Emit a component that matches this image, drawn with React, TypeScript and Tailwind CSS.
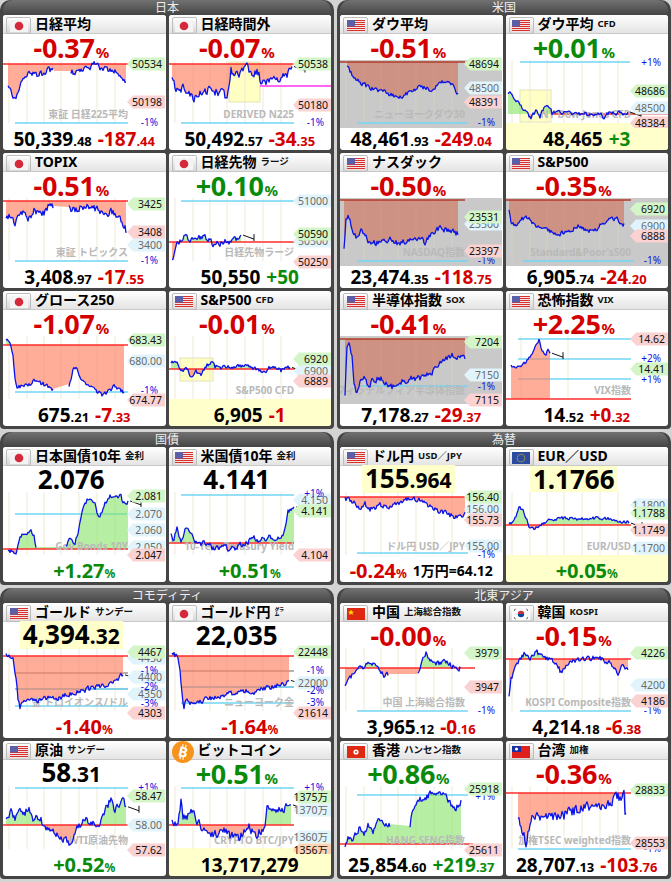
import { useId, useMemo } from "react";

type Tag = [number, string, "g" | "p" | "b" | "n" | "o"];
type ChartSpec = {
  base: number;
  baseX?: [number, number];
  pts: [number, number][];
  noise: number;
  seed: number;
  gaps?: [number, number][];
  tags: Tag[];
  cyan?: number[];
  cyanX?: [number, number];
  grayLines?: number[];
  gridX?: number[];
  wm?: string;
  gray?: boolean;
  box?: [number, number, number, number];
  mag?: [number, number, number];
  invert?: boolean;
  yellowFrom?: number;
  mark?: boolean;
};
type Num = [string, string, "k" | "r" | "g"];
type CardSpec = {
  flag: string;
  title: string;
  sub?: string;
  top: { p?: string; c?: "r" | "g"; i?: string; f?: string; hl?: boolean };
  chart: ChartSpec;
  foot: { n?: Num[]; p?: string; c?: "r" | "g"; extra?: string; yellow?: boolean };
};

const W = 162;
const H = 68;
const RED = "#d40000";
const GREEN = "#0a8a0a";
const col = (c: string) => (c === "r" ? RED : c === "g" ? GREEN : "#000");

function rng(seed: number) {
  let a = seed * 9973;
  return () => {
    a = (a + 0x6d2b79f5) | 0;
    let t = Math.imul(a ^ (a >>> 15), 1 | a);
    t = (t + Math.imul(t ^ (t >>> 7), 61 | t)) ^ t;
    return ((t ^ (t >>> 14)) >>> 0) / 4294967296;
  };
}

function build(c: ChartSpec): [number, number, boolean][] {
  const r = rng(c.seed);
  const P = c.pts;
  const out: [number, number, boolean][] = [];
  let v = 0;
  for (let x = P[0][0]; x <= P[P.length - 1][0]; x += 1) {
    let i = 0;
    while (i < P.length - 2 && x > P[i + 1][0]) i++;
    const [ax, ay] = P[i];
    const [bx, by] = P[i + 1];
    const t = bx === ax ? 0 : (x - ax) / (bx - ax);
    const y0 = ay + (by - ay) * t;
    const gap = (c.gaps ?? []).some(([a, b]) => x > a && x < b);
    v = 0.3 * v + (r() - 0.5) * 2 * c.noise;
    const y = gap ? y0 : Math.max(0, Math.min(H, y0 + v));
    out.push([x, y, gap]);
  }
  return out;
}

function Chart({ c }: { c: ChartSpec }) {
  const id = useId().replace(/:/g, "");
  const pts = useMemo(() => build(c), [c]);
  const x0 = pts[0][0];
  const last = pts[pts.length - 1];
  const x1 = last[0];
  const [bx0, bx1] = c.baseX ?? [0, 125];
  const [cx0, cx1] = c.cyanX ?? [12, 125];
  const fillD =
    `M${x0},${c.base} ` + pts.map((p) => `L${p[0]},${p[1].toFixed(1)}`).join(" ") + ` L${x1},${c.base} Z`;
  const segs: string[] = [];
  let cur = "";
  pts.forEach(([x, y, g]) => {
    if (g) {
      if (cur) segs.push(cur);
      cur = "";
    } else cur += (cur ? " L" : "M") + `${x},${y.toFixed(1)}`;
  });
  if (cur) segs.push(cur);
  const salmon = c.gray ? "#d06a52" : "#ff7f5f";
  const salOp = c.gray ? 0.58 : 0.64;
  const up = c.invert ? salmon : "#86e466";
  const upOp = c.invert ? salOp : 0.6;
  const dn = c.invert ? "#86e466" : salmon;
  const dnOp = c.invert ? 0.6 : salOp;
  const grid = c.gridX ?? [6, 24, 41, 58, 76, 94, 112];
  const tagBg: Record<string, string> = { g: "#d3f5c8", p: "#fbd2d2", b: "#e1f4fb", o: "#fcd3b4" };
  const order = ["b", "n", "g", "p", "o"];
  const tags = [...c.tags].sort((a, b) => order.indexOf(a[2]) - order.indexOf(b[2]));
  return (
    <svg
      width={W}
      height={H}
      className="block overflow-visible"
      fontFamily="'Noto Sans', 'Noto Sans CJK JP', sans-serif"
    >
      <defs>
        <clipPath id={id + "a"}>
          <rect x={0} y={0} width={W} height={c.base} />
        </clipPath>
        <clipPath id={id + "b"}>
          <rect x={0} y={c.base} width={W} height={H - c.base} />
        </clipPath>
      </defs>
      {c.gray && <rect x={0} y={0} width={W} height={H} fill="#c9c9c9" />}
      {c.yellowFrom !== undefined && <rect x={0} y={c.yellowFrom} width={W} height={H - c.yellowFrom} fill="#ffffcc" />}
      {c.box && (
        <rect
          x={c.box[0]}
          y={c.box[1]}
          width={c.box[2] - c.box[0]}
          height={c.box[3] - c.box[1]}
          fill="#ffffc4"
          stroke="#e2e2b8"
        />
      )}
      {grid.map((x) => (
        <line key={x} x1={x} x2={x} y1={0} y2={63} stroke={c.gray ? "#d6d0c2" : "#efe9d6"} strokeWidth={1} />
      ))}
      {(c.grayLines ?? []).map((y) => (
        <line key={"g" + y} x1={12} x2={125} y1={y} y2={y} stroke="#9a9a9a" strokeWidth={1.5} />
      ))}
      {(c.cyan ?? []).map((y) => (
        <line key={"c" + y} x1={cx0} x2={cx1} y1={y} y2={y} stroke="#6fd6f4" strokeWidth={1.6} />
      ))}
      <path d={fillD} fill={up} fillOpacity={upOp} clipPath={`url(#${id}a)`} />
      <path d={fillD} fill={dn} fillOpacity={dnOp} clipPath={`url(#${id}b)`} />
      <line x1={bx0} x2={bx1} y1={c.base} y2={c.base} stroke={c.gray ? "#b23a28" : "#ff2d2d"} strokeWidth={1.3} />
      {c.mag && <line x1={c.mag[0]} x2={c.mag[1]} y1={c.mag[2]} y2={c.mag[2]} stroke="#ff33ee" strokeWidth={1.3} />}
      {c.wm && (
        <text x={125} y={58} textAnchor="end" fontSize={10} fontWeight={700} fill="#b9b9b9">
          {c.wm}
        </text>
      )}
      {segs.map((d, i) => (
        <path key={i} d={d} fill="none" stroke="#0a14e6" strokeWidth={1.3} strokeLinejoin="round" />
      ))}
      {c.mark && (
        <g stroke="#111" strokeWidth={1} fill="none">
          <path d={`M${x1 + 2},${last[1].toFixed(1)} L${x1 + 13},${(last[1] + 4).toFixed(1)}`} />
          <path d={`M${x1 + 13},${(last[1] - 1).toFixed(1)} L${x1 + 13},${(last[1] + 6).toFixed(1)}`} />
        </g>
      )}
      {tags.map(([y, t, k], i) =>
        k === "n" ? (
          <text key={i} x={155} y={Math.min(y, 62) + 3.5} textAnchor="end" fontSize={10} fill="#1010dd">
            {t}
          </text>
        ) : (
          <g key={i}>
            <polygon
              points={`124,${y} 130,${y - 6.5} 162,${y - 6.5} 162,${y + 6.5} 130,${y + 6.5}`}
              fill={tagBg[k]}
            />
            <text x={159} y={y + 3.6} textAnchor="end" fontSize={10.5} fill={k === "b" ? "#6a6a6a" : "#111"}>
              {t}
            </text>
          </g>
        )
      )}
    </svg>
  );
}

function Flag({ f }: { f: string }) {
  if (f === "btc") {
    return (
      <div className="ml-[3px] mt-[3px] flex h-[22px] w-[22px] shrink-0 items-center justify-center rounded-full bg-[#f7931a]">
        <svg width={14} height={16} viewBox="0 0 14 16">
          <g transform="rotate(12 7 8)">
            <text x={7} y={13} textAnchor="middle" fontSize={14} fontWeight={700} fill="#fff" fontFamily="'Noto Sans', sans-serif">
              B
            </text>
            <path d="M5.5 0.5 V3 M8.5 0.5 V3 M5.5 13 V15.5 M8.5 13 V15.5" stroke="#fff" strokeWidth={1.3} />
          </g>
        </svg>
      </div>
    );
  }
  let inner = null;
  if (f === "jp")
    inner = (
      <>
        <rect width={18} height={12} fill="#f4f4f4" />
        <circle cx={9} cy={6} r={4.3} fill="#d42a3c" />
      </>
    );
  if (f === "us")
    inner = (
      <>
        <rect width={18} height={12} fill="#f6f6f6" />
        {[0, 2, 4, 6, 8, 10].map((y) => (
          <rect key={y} y={y} width={18} height={1.1} fill="#d8322e" />
        ))}
        <rect width={8} height={6.5} fill="#5a5fa8" />
      </>
    );
  if (f === "cn")
    inner = (
      <>
        <rect width={18} height={12} fill="#de2910" />
        <polygon points="4,1.5 4.9,3.6 7,3.7 5.4,5 6,7 4,5.8 2,7 2.6,5 1,3.7 3.1,3.6" fill="#ffde00" />
      </>
    );
  if (f === "kr")
    inner = (
      <>
        <rect width={18} height={12} fill="#fafafa" />
        <path d="M5.8 6 A3.2 3.2 0 0 1 12.2 6 Z" fill="#cd2e3a" />
        <path d="M5.8 6 A3.2 3.2 0 0 0 12.2 6 Z" fill="#0047a0" />
        <path d="M2 2.5 L3.5 1.2 M14.5 1.2 L16 2.5 M2 9.5 L3.5 10.8 M14.5 10.8 L16 9.5" stroke="#222" strokeWidth={1} />
      </>
    );
  if (f === "hk")
    inner = (
      <>
        <rect width={18} height={12} fill="#de2910" />
        <circle cx={9} cy={6} r={2.6} fill="#fff" />
        <circle cx={9} cy={6} r={0.9} fill="#de2910" />
      </>
    );
  if (f === "tw")
    inner = (
      <>
        <rect width={18} height={12} fill="#e0201c" />
        <rect width={9} height={6} fill="#1a2fa0" />
        <circle cx={4.5} cy={3} r={1.6} fill="#fff" />
      </>
    );
  if (f === "eu")
    inner = (
      <>
        <rect width={18} height={12} fill="#2b4aa0" />
        {Array.from({ length: 12 }, (_, i) => (
          <circle
            key={i}
            cx={9 + 3.8 * Math.cos((i * Math.PI) / 6)}
            cy={6 + 3.8 * Math.sin((i * Math.PI) / 6)}
            r={0.55}
            fill="#ffd700"
          />
        ))}
      </>
    );
  return (
    <div className="ml-[3px] mt-[3px] flex h-[17px] w-[25px] shrink-0 items-center justify-center rounded-[2px] border border-[#bdbdbd] bg-gradient-to-b from-white to-[#d6d6d6]">
      <svg width={18} height={12}>{inner}</svg>
    </div>
  );
}

function Card({ s }: { s: CardSpec }) {
  const t = s.top;
  return (
    <div className="flex h-[135px] flex-col overflow-hidden rounded-[3px] bg-white">
      <div className="flex h-[19px] shrink-0 items-center border-b border-[#c9c9c9] bg-gradient-to-b from-white to-[#e4e4e4]">
        <Flag f={s.flag} />
        <span className="ml-[4px] text-[14px] font-bold leading-none text-black">{s.title}</span>
        {s.sub && <span className="ml-[4px] text-[9.5px] font-bold leading-none text-[#111]">{s.sub}</span>}
      </div>
      <div className="flex h-[26px] shrink-0 items-center justify-center pr-[26px]">
        {t.p ? (
          <span className="text-[27px] font-bold leading-none tracking-[-0.3px]" style={{ color: col(t.c!) }}>
            {t.p}
            <span className="ml-[1px] text-[15px]">%</span>
          </span>
        ) : (
          <span className={`px-[3px] text-[26px] font-bold leading-[26px] text-black ${t.hl ? "bg-[#ffffcc]" : ""}`}>
            {t.i}
            {t.f && <span className="text-[21px]">{t.f}</span>}
          </span>
        )}
      </div>
      <div className="h-[68px] shrink-0">
        <Chart c={s.chart} />
      </div>
      <div
        className={`flex h-[22px] shrink-0 items-center justify-center gap-[6px] ${s.foot.yellow ? "bg-[#ffffcc]" : ""}`}
      >
        {s.foot.n?.map(([i, f, c], k) => (
          <span key={k} className="text-[19px] font-bold leading-none" style={{ color: col(c) }}>
            {i}
            {f && <span className="text-[13px]">{f}</span>}
          </span>
        ))}
        {s.foot.p && (
          <span className="text-[20px] font-bold leading-none" style={{ color: col(s.foot.c!) }}>
            {s.foot.p}
            <span className="text-[12px]">%</span>
          </span>
        )}
        {s.foot.extra && <span className="text-[14px] font-bold leading-none text-black">{s.foot.extra}</span>}
      </div>
    </div>
  );
}

function Section({ title, cards }: { title: string; cards: CardSpec[] }) {
  return (
    <div className="rounded-t-[10px] rounded-b-[4px] bg-[#454545] px-[3px] pb-[3px]">
      <div className="h-[15px] rounded-t-[10px] bg-gradient-to-b from-[#727272] to-[#454545] text-center text-[12px] leading-[15px] text-[#eeeeee]">
        {title}
      </div>
      <div className="grid grid-cols-2 gap-[3px]">
        {cards.map((c) => (
          <Card key={c.title + (c.sub ?? "")} s={c} />
        ))}
      </div>
    </div>
  );
}

const japan: CardSpec[] = [
  {
    flag: "jp",
    title: "日経平均",
    top: { p: "-0.37", c: "r" },
    chart: {
      base: 4,
      pts: [[5, 27], [9, 35], [13, 40], [18, 25], [25, 12], [35, 16], [45, 10], [50, 11], [68, 11], [75, 14], [85, 8], [92, 4], [100, 10], [108, 9], [115, 14], [123, 23]],
      noise: 3,
      seed: 1,
      gaps: [[50, 68]],
      tags: [[4, "50534", "g"], [42, "50198", "p"], [63, "-1%", "n"]],
      cyan: [63],
      wm: "東証 日経225平均",
    },
    foot: { n: [["50,339", ".48", "k"], ["-187", ".44", "r"]] },
  },
  {
    flag: "jp",
    title: "日経時間外",
    top: { p: "-0.07", c: "r" },
    chart: {
      base: 4,
      pts: [[3, 20], [8, 30], [15, 28], [25, 38], [35, 30], [45, 32], [55, 33], [58, 40], [62, 10], [70, 15], [78, 8], [85, 14], [90, 12], [92, 25], [100, 22], [110, 18], [118, 14], [123, 8]],
      noise: 4,
      seed: 2,
      tags: [[4, "50538", "g"], [45, "50180", "p"], [63, "-1%", "n"]],
      cyan: [63],
      box: [60, 2, 91, 42],
      mag: [91, 162, 26],
      wm: "DERIVED N225",
      mark: true,
    },
    foot: { n: [["50,492", ".57", "k"], ["-34", ".35", "r"]] },
  },
  {
    flag: "jp",
    title: "TOPIX",
    top: { p: "-0.51", c: "r" },
    chart: {
      base: 3,
      pts: [[3, 22], [8, 18], [12, 25], [18, 14], [25, 20], [32, 12], [40, 16], [45, 9], [50, 8], [66, 9], [72, 12], [80, 8], [88, 9], [95, 12], [100, 16], [108, 14], [115, 18], [120, 26], [123, 32]],
      noise: 3.5,
      seed: 5,
      gaps: [[50, 66]],
      tags: [[6, "3425", "g"], [34, "3408", "p"], [47, "3400", "b"], [63, "-1%", "n"]],
      cyan: [63],
      wm: "東証 トピックス",
    },
    foot: { n: [["3,408", ".97", "k"], ["-17", ".55", "r"]] },
  },
  {
    flag: "jp",
    title: "日経先物",
    sub: "ラージ",
    top: { p: "+0.10", c: "g" },
    chart: {
      base: 44,
      pts: [[3, 64], [6, 52], [8, 44], [15, 40], [25, 42], [35, 38], [45, 46], [55, 44], [62, 44], [68, 40], [72, 37]],
      noise: 3,
      seed: 6,
      tags: [[3, "51000", "b"], [43, "50500", "b"], [36, "50590", "g"], [64, "50250", "p"]],
      cyan: [3],
      wm: "日経先物ラージ",
      mark: true,
    },
    foot: { n: [["50,550", "", "k"], ["+50", "", "g"]] },
  },
  {
    flag: "jp",
    title: "グロース250",
    top: { p: "-1.07", c: "r" },
    chart: {
      base: 9,
      pts: [[3, 4], [7, 6], [10, 20], [12, 40], [14, 52], [20, 50], [28, 49], [32, 44], [40, 48], [48, 52], [50, 53], [66, 48], [70, 35], [73, 32], [78, 45], [85, 50], [92, 54], [100, 60], [105, 56], [112, 50], [118, 54], [121, 57]],
      noise: 2,
      seed: 9,
      gaps: [[50, 66]],
      tags: [[25, "680.00", "b"], [54, "-1%", "n"], [4, "683.43", "g"], [64, "674.77", "p"]],
      cyan: [56],
      wm: "",
    },
    foot: { n: [["675", ".21", "k"], ["-7", ".33", "r"]] },
  },
  {
    flag: "us",
    title: "S&P500",
    sub: "CFD",
    top: { p: "-0.01", c: "r" },
    chart: {
      base: 33,
      baseX: [0, 162],
      pts: [[2, 28], [6, 24], [10, 30], [14, 36], [18, 32], [22, 40], [27, 36], [32, 38], [37, 30], [42, 26], [46, 31], [60, 31], [75, 30], [85, 32], [92, 34], [96, 38], [100, 32], [108, 32], [112, 35], [116, 31], [121, 31]],
      noise: 2,
      seed: 10,
      tags: [[35, "6900", "b"], [23, "6920", "g"], [45, "6889", "p"]],
      box: [11, 22, 44, 45],
      yellowFrom: 63,
      wm: "S&P500 CFD",
      mark: true,
    },
    foot: { n: [["6,905", "", "k"], ["-1", "", "r"]], yellow: true },
  },
];

const usa: CardSpec[] = [
  {
    flag: "us",
    title: "ダウ平均",
    top: { p: "-0.51", c: "r" },
    chart: {
      base: 2,
      gray: true,
      pts: [[7, 5], [12, 15], [20, 22], [30, 28], [45, 32], [58, 38], [70, 32], [80, 26], [90, 30], [100, 24], [106, 21], [112, 25], [118, 34]],
      noise: 2,
      seed: 3,
      tags: [[28, "48500", "b"], [4, "48694", "g"], [42, "48391", "p"], [63, "-1%", "n"]],
      cyan: [63],
      cyanX: [17, 128],
      wm: "ニューヨークダウ30",
    },
    foot: { n: [["48,461", ".93", "k"], ["-249", ".04", "r"]] },
  },
  {
    flag: "us",
    title: "ダウ平均",
    sub: "CFD",
    top: { p: "+0.01", c: "g" },
    chart: {
      base: 54,
      baseX: [45, 162],
      pts: [[2, 32], [6, 34], [10, 40], [16, 48], [20, 52], [25, 58], [30, 50], [34, 56], [38, 48], [42, 44], [46, 53], [60, 53], [80, 54], [95, 55], [98, 58], [102, 53], [122, 53]],
      noise: 2,
      seed: 4,
      tags: [[2, "+1%", "n"], [48, "48500", "b"], [31, "48686", "g"], [63, "48384", "p"]],
      cyan: [2],
      cyanX: [14, 124],
      box: [14, 30, 45, 62],
      yellowFrom: 63,
      wm: "NY Dow Jones CFD",
      mark: true,
    },
    foot: { n: [["48,465", "", "k"], ["+3", "", "g"]], yellow: true },
  },
  {
    flag: "us",
    title: "ナスダック",
    top: { p: "-0.50", c: "r" },
    chart: {
      base: 2,
      gray: true,
      pts: [[4, 48], [6, 20], [9, 18], [13, 35], [17, 40], [22, 30], [28, 42], [40, 46], [50, 40], [58, 47], [65, 44], [75, 40], [85, 44], [95, 34], [100, 30], [110, 32], [118, 36]],
      noise: 3,
      seed: 7,
      tags: [[26, "23500", "b"], [19, "23531", "g"], [53, "23397", "p"], [63, "-1%", "n"]],
      cyan: [63],
      cyanX: [17, 128],
      wm: "NASDAQ指数",
    },
    foot: { n: [["23,474", ".35", "k"], ["-118", ".75", "r"]] },
  },
  {
    flag: "us",
    title: "S&P500",
    top: { p: "-0.35", c: "r" },
    chart: {
      base: 2,
      gray: true,
      pts: [[3, 12], [5, 24], [10, 28], [15, 22], [20, 18], [30, 28], [40, 32], [52, 36], [62, 34], [72, 28], [80, 32], [88, 34], [95, 26], [102, 22], [110, 20], [118, 27]],
      noise: 2,
      seed: 8,
      tags: [[28, "6900", "b"], [11, "6920", "g"], [38, "6888", "p"], [63, "-1%", "n"]],
      cyan: [63],
      cyanX: [17, 128],
      wm: "Standard&Poor's500",
    },
    foot: { n: [["6,905", ".74", "k"], ["-24", ".20", "r"]] },
  },
  {
    flag: "us",
    title: "半導体指数",
    sub: "SOX",
    top: { p: "-0.41", c: "r" },
    chart: {
      base: 3,
      gray: true,
      pts: [[5, 60], [7, 10], [9, 5], [12, 20], [14, 45], [17, 58], [20, 45], [25, 40], [28, 52], [33, 44], [40, 42], [48, 48], [55, 52], [62, 46], [70, 42], [80, 42], [90, 38], [100, 28], [108, 22], [113, 20], [116, 24], [120, 22], [125, 21]],
      noise: 3,
      seed: 11,
      tags: [[39, "7150", "b"], [50, "-1%", "n"], [6, "7204", "g"], [64, "7115", "p"]],
      cyan: [50],
      cyanX: [17, 128],
      wm: "フィラデルフィア半導体指数",
    },
    foot: { n: [["7,178", ".27", "k"], ["-29", ".37", "r"]] },
  },
  {
    flag: "us",
    title: "恐怖指数",
    sub: "VIX",
    top: { p: "+2.25", c: "r" },
    chart: {
      base: 63,
      invert: true,
      pts: [[5, 30], [10, 32], [16, 30], [22, 24], [27, 16], [31, 8], [33, 4], [36, 14], [39, 20], [42, 14], [44, 19]],
      noise: 1.5,
      seed: 12,
      tags: [[3, "14.62", "p"], [22, "+2%", "n"], [33, "14.41", "g"], [43, "+1%", "n"]],
      cyan: [3, 23, 43],
      gridX: [15, 62],
      wm: "VIX指数",
      mark: true,
    },
    foot: { n: [["14", ".52", "k"], ["+0", ".32", "r"]] },
  },
];

const bonds: CardSpec[] = [
  {
    flag: "jp",
    title: "日本国債10年",
    sub: "金利",
    top: { i: "2.076" },
    chart: {
      base: 57,
      pts: [[5, 58], [10, 60], [13, 62], [15, 52], [18, 44], [22, 42], [28, 40], [31, 45], [33, 55], [63, 55], [65, 48], [68, 45], [72, 52], [76, 36], [80, 18], [84, 8], [88, 10], [92, 12], [95, 24], [98, 22], [102, 12], [107, 4], [112, 6], [118, 4], [120, 12], [125, 10]],
      noise: 2,
      seed: 13,
      gaps: [[33, 63]],
      tags: [[22, "2.070", "b"], [38, "2.060", "b"], [55, "2.050", "b"], [4, "2.081", "g"], [63, "2.047", "p"]],
      cyan: [22],
      wm: "Gov Bonds 10Y",
      mark: true,
    },
    foot: { p: "+1.27", c: "g" },
  },
  {
    flag: "us",
    title: "米国債10年",
    sub: "金利",
    top: { i: "4.141" },
    chart: {
      base: 51,
      pts: [[2, 40], [5, 48], [8, 38], [12, 50], [15, 42], [18, 34], [22, 44], [28, 50], [35, 52], [45, 56], [55, 54], [62, 58], [70, 54], [78, 50], [85, 46], [92, 48], [100, 44], [108, 46], [114, 44], [117, 30], [119, 20], [125, 18]],
      noise: 3,
      seed: 14,
      tags: [[8, "4.150", "b"], [1, "+1%", "n"], [19, "4.141", "g"], [63, "4.104", "p"]],
      cyan: [3],
      wm: "10-Year Treasury Yield",
      mark: true,
    },
    foot: { p: "+0.51", c: "g" },
  },
];

const fx: CardSpec[] = [
  {
    flag: "us",
    title: "ドル円",
    sub: "USD／JPY",
    top: { i: "155", f: ".964", hl: true },
    chart: {
      base: 5,
      pts: [[5, 6], [10, 8], [15, 12], [20, 17], [25, 12], [30, 18], [40, 13], [50, 15], [60, 11], [70, 6], [80, 8], [90, 14], [100, 20], [108, 21], [112, 24], [118, 26], [125, 20]],
      noise: 2.5,
      seed: 15,
      tags: [[17, "156.00", "b"], [54, "155.00", "b"], [5, "156.40", "g"], [28, "155.73", "p"], [64, "-1%", "n"]],
      cyan: [61],
      cyanX: [17, 128],
      wm: "ドル円 USD／JPY",
      mark: true,
    },
    foot: { p: "-0.24", c: "r", extra: "1万円=64.12" },
  },
  {
    flag: "eu",
    title: "EUR／USD",
    top: { i: "1.1766", hl: true },
    chart: {
      base: 33,
      pts: [[3, 33], [8, 28], [11, 22], [13, 16], [17, 18], [20, 26], [23, 34], [27, 37], [33, 34], [40, 30], [48, 27], [60, 26], [75, 27], [90, 26], [105, 27], [115, 30], [123, 30]],
      noise: 1.5,
      seed: 16,
      tags: [[13, "1.1800", "b"], [56, "1.1700", "b"], [21, "1.1788", "g"], [38, "1.1749", "p"]],
      yellowFrom: 63,
      wm: "EUR/USD",
      mark: true,
    },
    foot: { p: "+0.05", c: "g", yellow: true },
  },
];

const commodities: CardSpec[] = [
  {
    flag: "us",
    title: "ゴールド",
    sub: "サンデー",
    top: { i: "4,394", f: ".32", hl: true },
    chart: {
      base: 8,
      pts: [[3, 6], [6, 6], [10, 12], [13, 30], [15, 50], [17, 62], [19, 55], [22, 52], [28, 50], [35, 52], [45, 50], [55, 50], [62, 47], [72, 45], [80, 42], [90, 40], [98, 38], [105, 37], [112, 32], [120, 27]],
      noise: 2.5,
      seed: 17,
      grayLines: [25, 41],
      cyan: [41, 58],
      tags: [[10, "4450", "b"], [29, "4400", "b"], [46, "4350", "b"], [22, "-1%", "n"], [38, "-2%", "n"], [55, "-3%", "n"], [4, "4467", "g"], [65, "4303", "p"]],
      wm: "金 トロイオンス/ドル",
      mark: true,
    },
    foot: { p: "-1.40", c: "r" },
  },
  {
    flag: "jp",
    title: "ゴールド円",
    sub: "㌘",
    top: { i: "22,035" },
    chart: {
      base: 8,
      pts: [[3, 6], [8, 8], [11, 20], [13, 45], [15, 62], [17, 52], [22, 55], [30, 54], [40, 50], [50, 50], [60, 46], [70, 44], [78, 43], [85, 46], [92, 40], [100, 40], [108, 38], [115, 36], [120, 33]],
      noise: 2.5,
      seed: 18,
      grayLines: [23, 39],
      cyan: [39, 55],
      tags: [[35, "22000", "b"], [22, "-1%", "n"], [42, "-2%", "n"], [54, "-3%", "n"], [4, "22448", "g"], [65, "21614", "p"]],
      wm: "ニューヨーク金",
      mark: true,
    },
    foot: { p: "-1.64", c: "r" },
  },
  {
    flag: "us",
    title: "原油",
    sub: "サンデー",
    top: { i: "58", f: ".31" },
    chart: {
      base: 39,
      pts: [[3, 30], [8, 25], [12, 32], [16, 22], [22, 28], [26, 20], [30, 34], [36, 30], [40, 38], [46, 44], [52, 48], [58, 52], [64, 55], [68, 58], [72, 46], [78, 38], [84, 34], [90, 36], [96, 38], [100, 30], [104, 20], [108, 14], [112, 24], [116, 18], [119, 10], [123, 20]],
      noise: 3.5,
      seed: 21,
      cyan: [2],
      tags: [[39, "58.00", "b"], [1, "+1%", "n"], [10, "58.47", "g"], [64, "57.62", "p"]],
      wm: "WTI原油先物",
      mark: true,
    },
    foot: { p: "+0.52", c: "g" },
  },
  {
    flag: "btc",
    title: "ビットコイン",
    top: { p: "+0.51", c: "g" },
    chart: {
      base: 39,
      pts: [[3, 35], [8, 40], [11, 25], [12, 12], [14, 30], [18, 32], [22, 25], [28, 35], [35, 44], [45, 48], [55, 45], [62, 50], [70, 52], [76, 45], [80, 40], [86, 50], [92, 44], [96, 40], [98, 20], [102, 28], [108, 22], [114, 26], [118, 20], [122, 20]],
      noise: 4,
      seed: 22,
      cyan: [2],
      tags: [[24, "1370万", "b"], [51, "1360万", "b"], [1, "+1%", "n"], [11, "1375万", "g"], [64, "1356万", "o"]],
      yellowFrom: 62,
      wm: "CRYPTO BTC/JPY",
      mark: true,
    },
    foot: { n: [["13,717,279", "", "k"]], yellow: true },
  },
];

const asia: CardSpec[] = [
  {
    flag: "cn",
    title: "中国",
    sub: "上海総合指数",
    top: { p: "-0.00", c: "r" },
    chart: {
      base: 20,
      baseX: [0, 135],
      pts: [[5, 40], [8, 34], [12, 28], [18, 22], [24, 18], [30, 14], [36, 16], [40, 20], [44, 28], [48, 26], [78, 26], [80, 22], [84, 8], [86, 5], [90, 12], [95, 14], [100, 16], [105, 13], [110, 16], [115, 20], [120, 20]],
      noise: 2.5,
      seed: 19,
      gaps: [[48, 78]],
      tags: [[5, "3979", "g"], [39, "3947", "p"], [63, "-1%", "n"]],
      cyan: [63],
      cyanX: [17, 128],
      wm: "中国 上海総合指数",
    },
    foot: { n: [["3,965", ".12", "k"], ["-0", ".16", "r"]] },
  },
  {
    flag: "kr",
    title: "韓国",
    sub: "KOSPI",
    top: { p: "-0.15", c: "r" },
    chart: {
      base: 11,
      pts: [[3, 50], [5, 32], [8, 22], [12, 15], [18, 6], [24, 10], [30, 4], [36, 8], [42, 10], [48, 14], [55, 24], [60, 18], [66, 14], [75, 12], [85, 10], [95, 11], [102, 14], [108, 18], [112, 26], [116, 18], [122, 20]],
      noise: 2.5,
      seed: 20,
      tags: [[37, "4200", "b"], [5, "4226", "g"], [53, "4186", "p"], [64, "-1%", "n"]],
      cyan: [63],
      cyanX: [14, 125],
      wm: "KOSPI Composite指数",
    },
    foot: { n: [["4,214", ".18", "k"], ["-6", ".38", "r"]] },
  },
  {
    flag: "hk",
    title: "香港",
    sub: "ハンセン指数",
    top: { p: "+0.86", c: "g" },
    chart: {
      base: 58,
      baseX: [0, 133],
      pts: [[5, 60], [8, 52], [12, 55], [16, 48], [20, 42], [24, 48], [28, 38], [33, 45], [38, 36], [42, 32], [47, 40], [50, 38], [70, 40], [72, 28], [75, 22], [80, 12], [85, 14], [90, 8], [95, 10], [100, 5], [105, 10], [110, 16], [115, 25], [118, 20], [121, 15]],
      noise: 3,
      seed: 23,
      gaps: [[50, 70]],
      cyan: [9],
      cyanX: [17, 128],
      tags: [[10, "+1%", "n"], [3, "25918", "g"], [64, "25611", "p"]],
      wm: "HANG SENG指数",
    },
    foot: { n: [["25,854", ".60", "k"], ["+219", ".37", "g"]] },
  },
  {
    flag: "tw",
    title: "台湾",
    sub: "加権",
    top: { p: "-0.36", c: "r" },
    chart: {
      base: 7,
      pts: [[12, 30], [15, 40], [18, 48], [20, 55], [23, 40], [27, 32], [32, 30], [40, 28], [50, 30], [60, 28], [68, 25], [78, 22], [88, 20], [98, 17], [108, 14], [115, 10], [118, 4], [119, 25], [120, 28]],
      noise: 5,
      seed: 24,
      tags: [[63, "-1%", "n"], [4, "28833", "g"], [57, "28553", "p"]],
      cyan: [63],
      wm: "加権TSEC weighted指数",
    },
    foot: { n: [["28,707", ".13", "k"], ["-103", ".76", "r"]] },
  },
];

export default function App() {
  return (
    <div className="min-h-[882px] w-[671px] bg-[#d3d3d3] font-['Noto_Sans','Noto_Sans_CJK_JP',sans-serif]">
      <div className="grid grid-cols-2 gap-[3px]">
        <Section title="日本" cards={japan} />
        <Section title="米国" cards={usa} />
        <Section title="国債" cards={bonds} />
        <Section title="為替" cards={fx} />
        <Section title="コモディティ" cards={commodities} />
        <Section title="北東アジア" cards={asia} />
      </div>
    </div>
  );
}
